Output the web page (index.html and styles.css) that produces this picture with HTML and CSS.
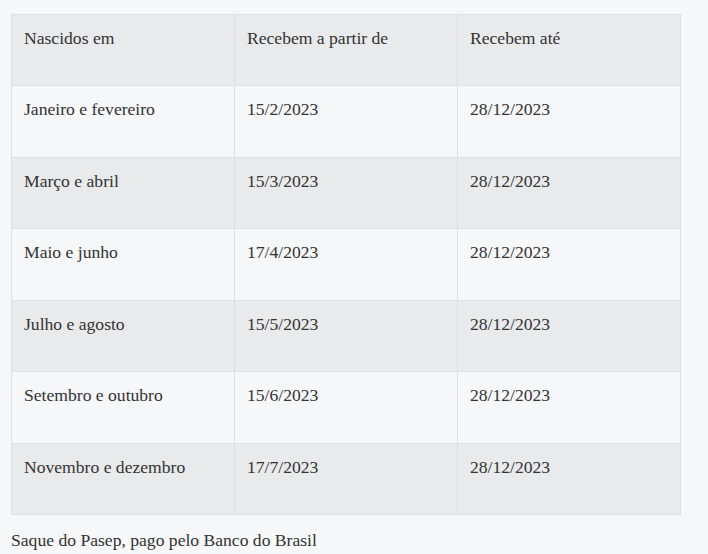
FILE: index.html
```html
<!DOCTYPE html>
<html lang="pt-BR">
<head>
<meta charset="utf-8">
<link rel="stylesheet" href="styles.css">
</head>
<body>
<div class="wrap">
<table class="tbl">
  <thead>
    <tr><th>Nascidos em</th><th>Recebem a partir de</th><th>Recebem até</th></tr>
  </thead>
  <tbody>
    <tr><td>Janeiro e fevereiro</td><td>15/2/2023</td><td>28/12/2023</td></tr>
    <tr><td>Março e abril</td><td>15/3/2023</td><td>28/12/2023</td></tr>
    <tr><td>Maio e junho</td><td>17/4/2023</td><td>28/12/2023</td></tr>
    <tr><td>Julho e agosto</td><td>15/5/2023</td><td>28/12/2023</td></tr>
    <tr><td>Setembro e outubro</td><td>15/6/2023</td><td>28/12/2023</td></tr>
    <tr><td>Novembro e dezembro</td><td>17/7/2023</td><td>28/12/2023</td></tr>
  </tbody>
</table>
<p class="caption">Saque do Pasep, pago pelo Banco do Brasil</p>
</div>
</body>
</html>
```
FILE: styles.css
```css
html, body {
  margin: 0;
  padding: 0;
  background: #f6f7f9;
}
body {
  font-family: "Liberation Serif", "DejaVu Serif", serif;
  color: #333;
  font-size: 17.6px;
}
.wrap {
  padding: 14px 0 0 11px;
}
.tbl {
  border-collapse: collapse;
  width: 670px;
  table-layout: fixed;
}
.tbl th, .tbl td {
  border: 1px solid #dedfe1;
  text-align: left;
  vertical-align: top;
  font-weight: normal;
  padding: 11px 12px 0 12px;
  height: 71.43px;
  line-height: 24px;
  box-sizing: border-box;
}
.tbl thead tr, .tbl tbody tr:nth-child(even) {
  background: #e9eaeb;
}
.tbl tbody tr:nth-child(odd) {
  background: #f6f7f9;
}
.caption {
  margin: 13px 0 0 0;
  line-height: 24px;
}
```
